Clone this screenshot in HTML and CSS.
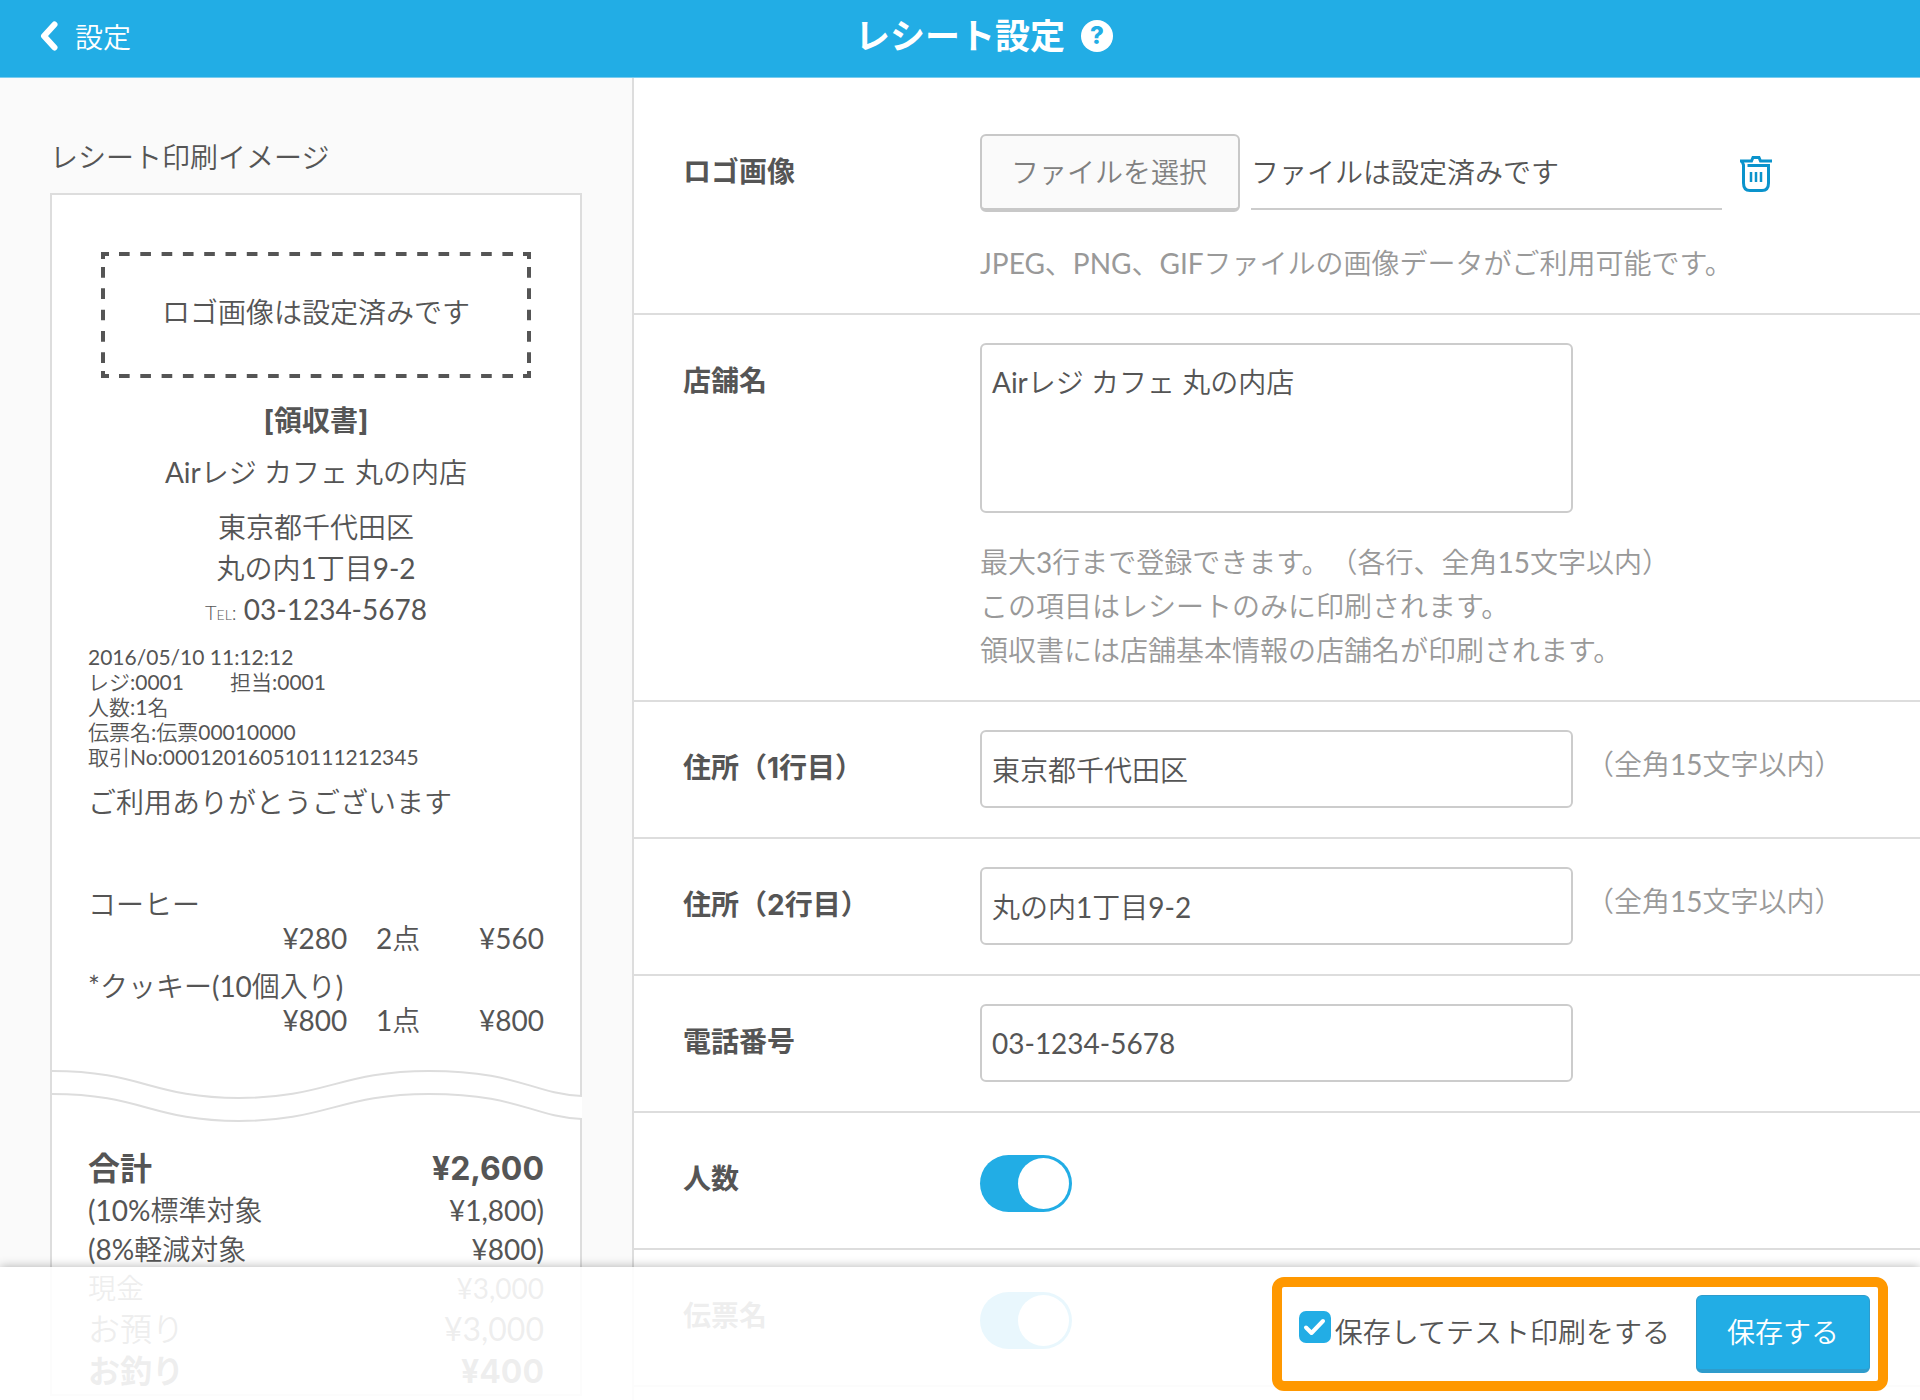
FILE: index.html
```html
<!DOCTYPE html>
<html lang="ja">
<head>
  <meta charset="UTF-8" />
  <meta name="viewport" content="width=device-width, initial-scale=1.0" />
  <title>レシート設定</title>
  <link rel="stylesheet" href="styles.css">
</head>
<body>
  <header class="header">
    <a class="back" href="#">
      <svg width="18" height="30" viewBox="0 0 18 30" aria-hidden="true"><path d="M14.500 3.500L4 15l10.500 11.500" fill="none" stroke="#fff" stroke-width="6" stroke-linecap="round" stroke-linejoin="round"/></svg>
      設定
    </a>
    <h1>レシート設定</h1>
    <button class="help" type="button" aria-label="ヘルプ">?</button>
  </header>

  <main class="main">
    <aside class="preview">
      <h2>レシート印刷イメージ</h2>
      <div class="receipt">
        <div class="logo-box">
          <svg class="logo-frame" viewBox="0 0 430 126" preserveAspectRatio="none" aria-hidden="true">
            <g fill="none" stroke="#555" stroke-width="4">
              <path d="M2 2H428M2 124H428" stroke-dasharray="10.650 10.650" stroke-dashoffset="5.300"/>
              <path d="M2 63V0M2 63V126M428 63V0M428 63V126" stroke-dasharray="10.650 10.650" stroke-dashoffset="5.300"/>
              <path d="M0 2H8M422 2H430M0 124H8M422 124H430M2 0V7M428 0V7M2 119V126M428 119V126"/>
            </g>
          </svg>
          ロゴ画像は設定済みです
        </div>
        <p class="receipt-title">[領収書]</p>
        <p class="shop">Airレジ カフェ 丸の内店</p>
        <p class="address">東京都千代田区<br>丸の内1丁目9-2<br><span class="tel">Tel:</span> 03-1234-5678</p>
        <div class="info">
          <p>2016/05/10 11:12:12</p>
          <p class="staff"><span>レジ:0001</span><span>担当:0001</span></p>
          <p>人数:1名</p>
          <p>伝票名:伝票00010000</p>
          <p>取引No:000120160510111212345</p>
        </div>
        <p class="thanks">ご利用ありがとうございます</p>
        <table class="items">
          <tbody>
            <tr><td colspan="3">コーヒー</td></tr>
            <tr class="num"><td>¥280</td><td>2点</td><td>¥560</td></tr>
          </tbody>
          <tbody>
            <tr><td colspan="3">*クッキー(10個入り)</td></tr>
            <tr class="num"><td>¥800</td><td>1点</td><td>¥800</td></tr>
          </tbody>
        </table>
        <svg class="wave" viewBox="0 0 530 52" preserveAspectRatio="none" aria-hidden="true">
          <path d="M0 1C90 1 100 28 187 28S288 1 377 1S478 23 530 26V49C478 46 466 24 377 24S276 51 187 51S90 24 0 24Z" fill="#fff"/>
          <path d="M0 1C90 1 100 28 187 28S288 1 377 1S478 23 530 26M0 24C90 24 100 51 187 51S288 24 377 24S478 46 530 49" fill="none" stroke="#ddd" stroke-width="2"/>
        </svg>
        <table class="totals">
          <tr class="strong"><th>合計</th><td>¥2,600</td></tr>
          <tr><th>(10%標準対象</th><td>¥1,800)</td></tr>
          <tr><th>(8%軽減対象</th><td>¥800)</td></tr>
          <tr><th>現金</th><td>¥3,000</td></tr>
          <tr class="large"><th>お預り</th><td>¥3,000</td></tr>
          <tr class="strong"><th>お釣り</th><td>¥400</td></tr>
        </table>
      </div>
    </aside>

    <form class="settings" id="settings">
      <div class="row">
        <label class="label" for="logoFile">ロゴ画像</label>
        <div class="field">
          <div class="file">
            <button class="file-button" type="button">ファイルを選択</button>
            <input class="file-name" id="logoFile" type="text" value="ファイルは設定済みです" readonly>
            <button class="trash" type="button" aria-label="削除">
              <svg width="32" height="36" viewBox="0 0 32 36" aria-hidden="true">
                <g fill="none" stroke="#0a93cc" stroke-width="3">
                  <path d="M0 5H11.500L13 1.500H19L20.500 5H32"/>
                  <path d="M2 5L3.500 9V27Q3.500 34.500 10 34.500H22Q28.500 34.500 28.500 27V9.500H7.500"/>
                  <path d="M11 16V26M16 16V26M21 16V26" stroke-width="2.500"/>
                </g>
              </svg>
            </button>
          </div>
          <p class="hint">JPEG、PNG、GIFファイルの画像データがご利用可能です。</p>
        </div>
      </div>

      <div class="row">
        <label class="label" for="shopName">店舗名</label>
        <div class="field">
          <textarea class="input" id="shopName">Airレジ カフェ 丸の内店</textarea>
          <p class="hint">最大3行まで登録できます。（各行、全角15文字以内）<br>この項目はレシートのみに印刷されます。<br>領収書には店舗基本情報の店舗名が印刷されます。</p>
        </div>
      </div>

      <div class="row">
        <label class="label" for="address1">住所（1行目）</label>
        <div class="field inline">
          <input class="input" id="address1" type="text" value="東京都千代田区">
          <span class="note">（全角15文字以内）</span>
        </div>
      </div>

      <div class="row">
        <label class="label" for="address2">住所（2行目）</label>
        <div class="field inline">
          <input class="input" id="address2" type="text" value="丸の内1丁目9-2">
          <span class="note">（全角15文字以内）</span>
        </div>
      </div>

      <div class="row">
        <label class="label" for="phone">電話番号</label>
        <div class="field inline">
          <input class="input" id="phone" type="text" value="03-1234-5678">
        </div>
      </div>

      <div class="row">
        <label class="label" for="people">人数</label>
        <div class="field inline switch">
          <input class="toggle" id="people" type="checkbox" checked>
        </div>
      </div>

      <div class="row">
        <label class="label" for="slip">伝票名</label>
        <div class="field inline switch">
          <input class="toggle" id="slip" type="checkbox" checked>
        </div>
      </div>
    </form>
  </main>

  <footer class="footer">
    <div class="save-box">
      <label class="test-print">
        <span class="check">
          <input type="checkbox" form="settings" checked>
          <svg width="32" height="32" viewBox="0 0 32 32" aria-hidden="true"><path d="M7 16.500L12.500 22L24 10" fill="none" stroke="#fff" stroke-width="4" stroke-linecap="round" stroke-linejoin="round"/></svg>
        </span>
        保存してテスト印刷をする
      </label>
      <button class="save" type="submit" form="settings">保存する</button>
    </div>
  </footer>
</body>
</html>
```
FILE: styles.css
```css
* {
  box-sizing: border-box;
}

body {
  margin: 0;
  height: 100vh;
  display: flex;
  flex-direction: column;
  overflow: hidden;
  font-family: Lato, 'Noto Sans CJK JP DemiLight', 'Noto Sans CJK JP', sans-serif;
  font-size: 28px;
  font-weight: 400;
  text-spacing-trim: space-all;
  color: #555;
  background: #fff;
}

h1, h2, p {
  margin: 0;
}

button, input, textarea {
  font: inherit;
  color: inherit;
}

button {
  cursor: pointer;
}

/* header */
.header {
  display: grid;
  grid-template-columns: 1fr auto 1fr;
  align-items: center;
  height: 78px;
  flex: none;
  padding: 0 40px 6px;
  color: #fff;
  background: #22ade5;
  border-bottom: 1px solid #7accef;
}

.back {
  display: flex;
  align-items: center;
  gap: 17px;
  color: #fff;
  text-decoration: none;
}

.header h1 {
  font-family: Inter, 'Noto Sans CJK JP', sans-serif;
  font-size: 35px;
  line-height: 52px;
  font-weight: 700;
}

.help {
  width: 32px;
  height: 32px;
  margin-left: 16px;
  padding: 0;
  border: none;
  border-radius: 50%;
  background: #fff;
  color: #22ade5;
  font-family: Inter, sans-serif;
  font-size: 24px;
  line-height: 32px;
  font-weight: 800;
}

/* columns */
.main {
  display: grid;
  grid-template-columns: 634px 1fr;
  flex: 1;
  min-height: 0;
}

.preview, .settings {
  overflow-y: auto;
  scrollbar-width: none;
}

/* receipt preview */
.preview {
  padding: 58px 50px 0;
  background: #fafafa;
  border-right: 2px solid #ddd;
}

.preview h2 {
  font-size: 28px;
  line-height: 42px;
  font-weight: 400;
  margin-bottom: 15px;
}

.receipt {
  padding: 57px 36px 0;
  border: 2px solid #ddd;
  background: #fff;
}

.logo-box {
  position: relative;
  height: 126px;
  margin: 0 13px 22px;
  line-height: 120px;
  text-align: center;
}

.logo-frame {
  position: absolute;
  top: 0;
  left: 0;
  width: 100%;
  height: 100%;
}

.receipt-title {
  font-family: Inter, 'Noto Sans CJK JP', sans-serif;
  font-weight: 700;
  line-height: 42px;
  text-align: center;
}

.shop {
  margin: 10px 0 14px;
  line-height: 41px;
  text-align: center;
}

.address {
  line-height: 41px;
  text-align: center;
}

.tel {
  font-size: 20px;
  line-height: 20px;
  font-weight: 300;
  font-variant: small-caps;
}

.info {
  margin: 14px 0 13px;
  font-size: 21px;
  line-height: 25px;
}

.staff {
  display: flex;
  gap: 46px;
}

.thanks {
  line-height: 41px;
}

table {
  width: 100%;
  border-collapse: collapse;
}

th, td {
  padding: 0;
  text-align: left;
  font-weight: inherit;
}

.items {
  margin-top: 64px;
  line-height: 34px;
}

.items tbody + tbody::before {
  content: "";
  display: block;
  height: 14px;
}

.num td {
  width: 124px;
  text-align: right;
}

.num td:first-child {
  width: 260px;
}

.num td:nth-child(2) {
  width: 73px;
}

.wave {
  display: block;
  width: calc(100% + 74px);
  height: 52px;
  margin: 33px -38px 25px -36px;
}

.totals {
  line-height: 39px;
}

.totals td {
  text-align: right;
}

.large {
  font-size: 32px;
  line-height: 42px;
}

.strong {
  font-family: Inter, 'Noto Sans CJK JP', sans-serif;
  font-size: 32px;
  line-height: 44px;
  font-weight: 700;
}

/* settings form */
.settings {
  padding-top: 28px;
}

.row {
  display: flex;
  padding: 28px 49px;
  border-bottom: 2px solid #ddd;
}

.label {
  flex: none;
  width: 297px;
  font-family: Inter, 'Noto Sans CJK JP', sans-serif;
  font-weight: 700;
  line-height: 76px;
}

.field {
  flex: 1;
}

.inline {
  display: flex;
  gap: 13px;
  height: 79px;
}

.input {
  display: block;
  width: 593px;
  height: 78px;
  padding: 0 10px;
  border: 2px solid #ccc;
  border-radius: 6px;
  background: #fff;
}

textarea.input {
  height: 170px;
  padding: 15px 10px;
  line-height: 44px;
  resize: none;
}

.hint {
  margin-top: 27px;
  line-height: 44px;
  color: #999;
}

.note {
  line-height: 68px;
  color: #999;
}

.file {
  display: flex;
  align-items: flex-start;
  height: 80px;
}

.file-button {
  width: 260px;
  height: 78px;
  padding: 0 2px 2px 0;
  border: 2px solid #c8c8c8;
  border-bottom-width: 4px;
  border-radius: 6px;
  background: #fafafa;
  color: #808080;
}

.file-name {
  width: 471px;
  height: 76px;
  margin: 0 18px 0 11px;
  padding: 0;
  border: none;
  border-bottom: 2px solid #ccc;
  background: none;
}

.trash {
  display: flex;
  padding: 0;
  margin-top: 22px;
  border: none;
  background: none;
}

.switch {
  padding-top: 14px;
}

.toggle {
  appearance: none;
  width: 92px;
  height: 57px;
  margin: 0;
  padding: 3px;
  border-radius: 29px;
  background: #ccc;
}

.toggle::before {
  content: "";
  display: block;
  width: 51px;
  height: 51px;
  border-radius: 50%;
  background: #fff;
}

.toggle:checked {
  background: #22ade5;
}

.toggle:checked::before {
  margin-left: auto;
}

/* footer */
.footer {
  position: fixed;
  left: 0;
  right: 0;
  bottom: 0;
  display: flex;
  justify-content: flex-end;
  padding: 10px 32px 9px;
  background: rgba(255, 255, 255, 0.9);
  box-shadow: 0 0 10px rgba(0, 0, 0, 0.3);
}

.save-box {
  display: flex;
  align-items: center;
  gap: 26px;
  height: 114px;
  padding: 0 8px 0 17px;
  border: 10px solid #ff9800;
  border-radius: 12px;
  background: #fff;
}

.test-print {
  display: flex;
  align-items: center;
  gap: 4px;
  padding-bottom: 4px;
  line-height: 42px;
}

.check {
  display: grid;
  margin-bottom: 10px;
}

.check input {
  appearance: none;
  grid-area: 1 / 1;
  width: 32px;
  height: 32px;
  margin: 0;
  border-radius: 7px;
  background: #22ade5;
}

.check svg {
  grid-area: 1 / 1;
}

.save {
  width: 174px;
  height: 78px;
  padding: 0 0 4px;
  border: 1px solid #2e9ccc;
  border-bottom-width: 4px;
  border-radius: 6px;
  background: #22ade5;
  color: #fff;
}
```
